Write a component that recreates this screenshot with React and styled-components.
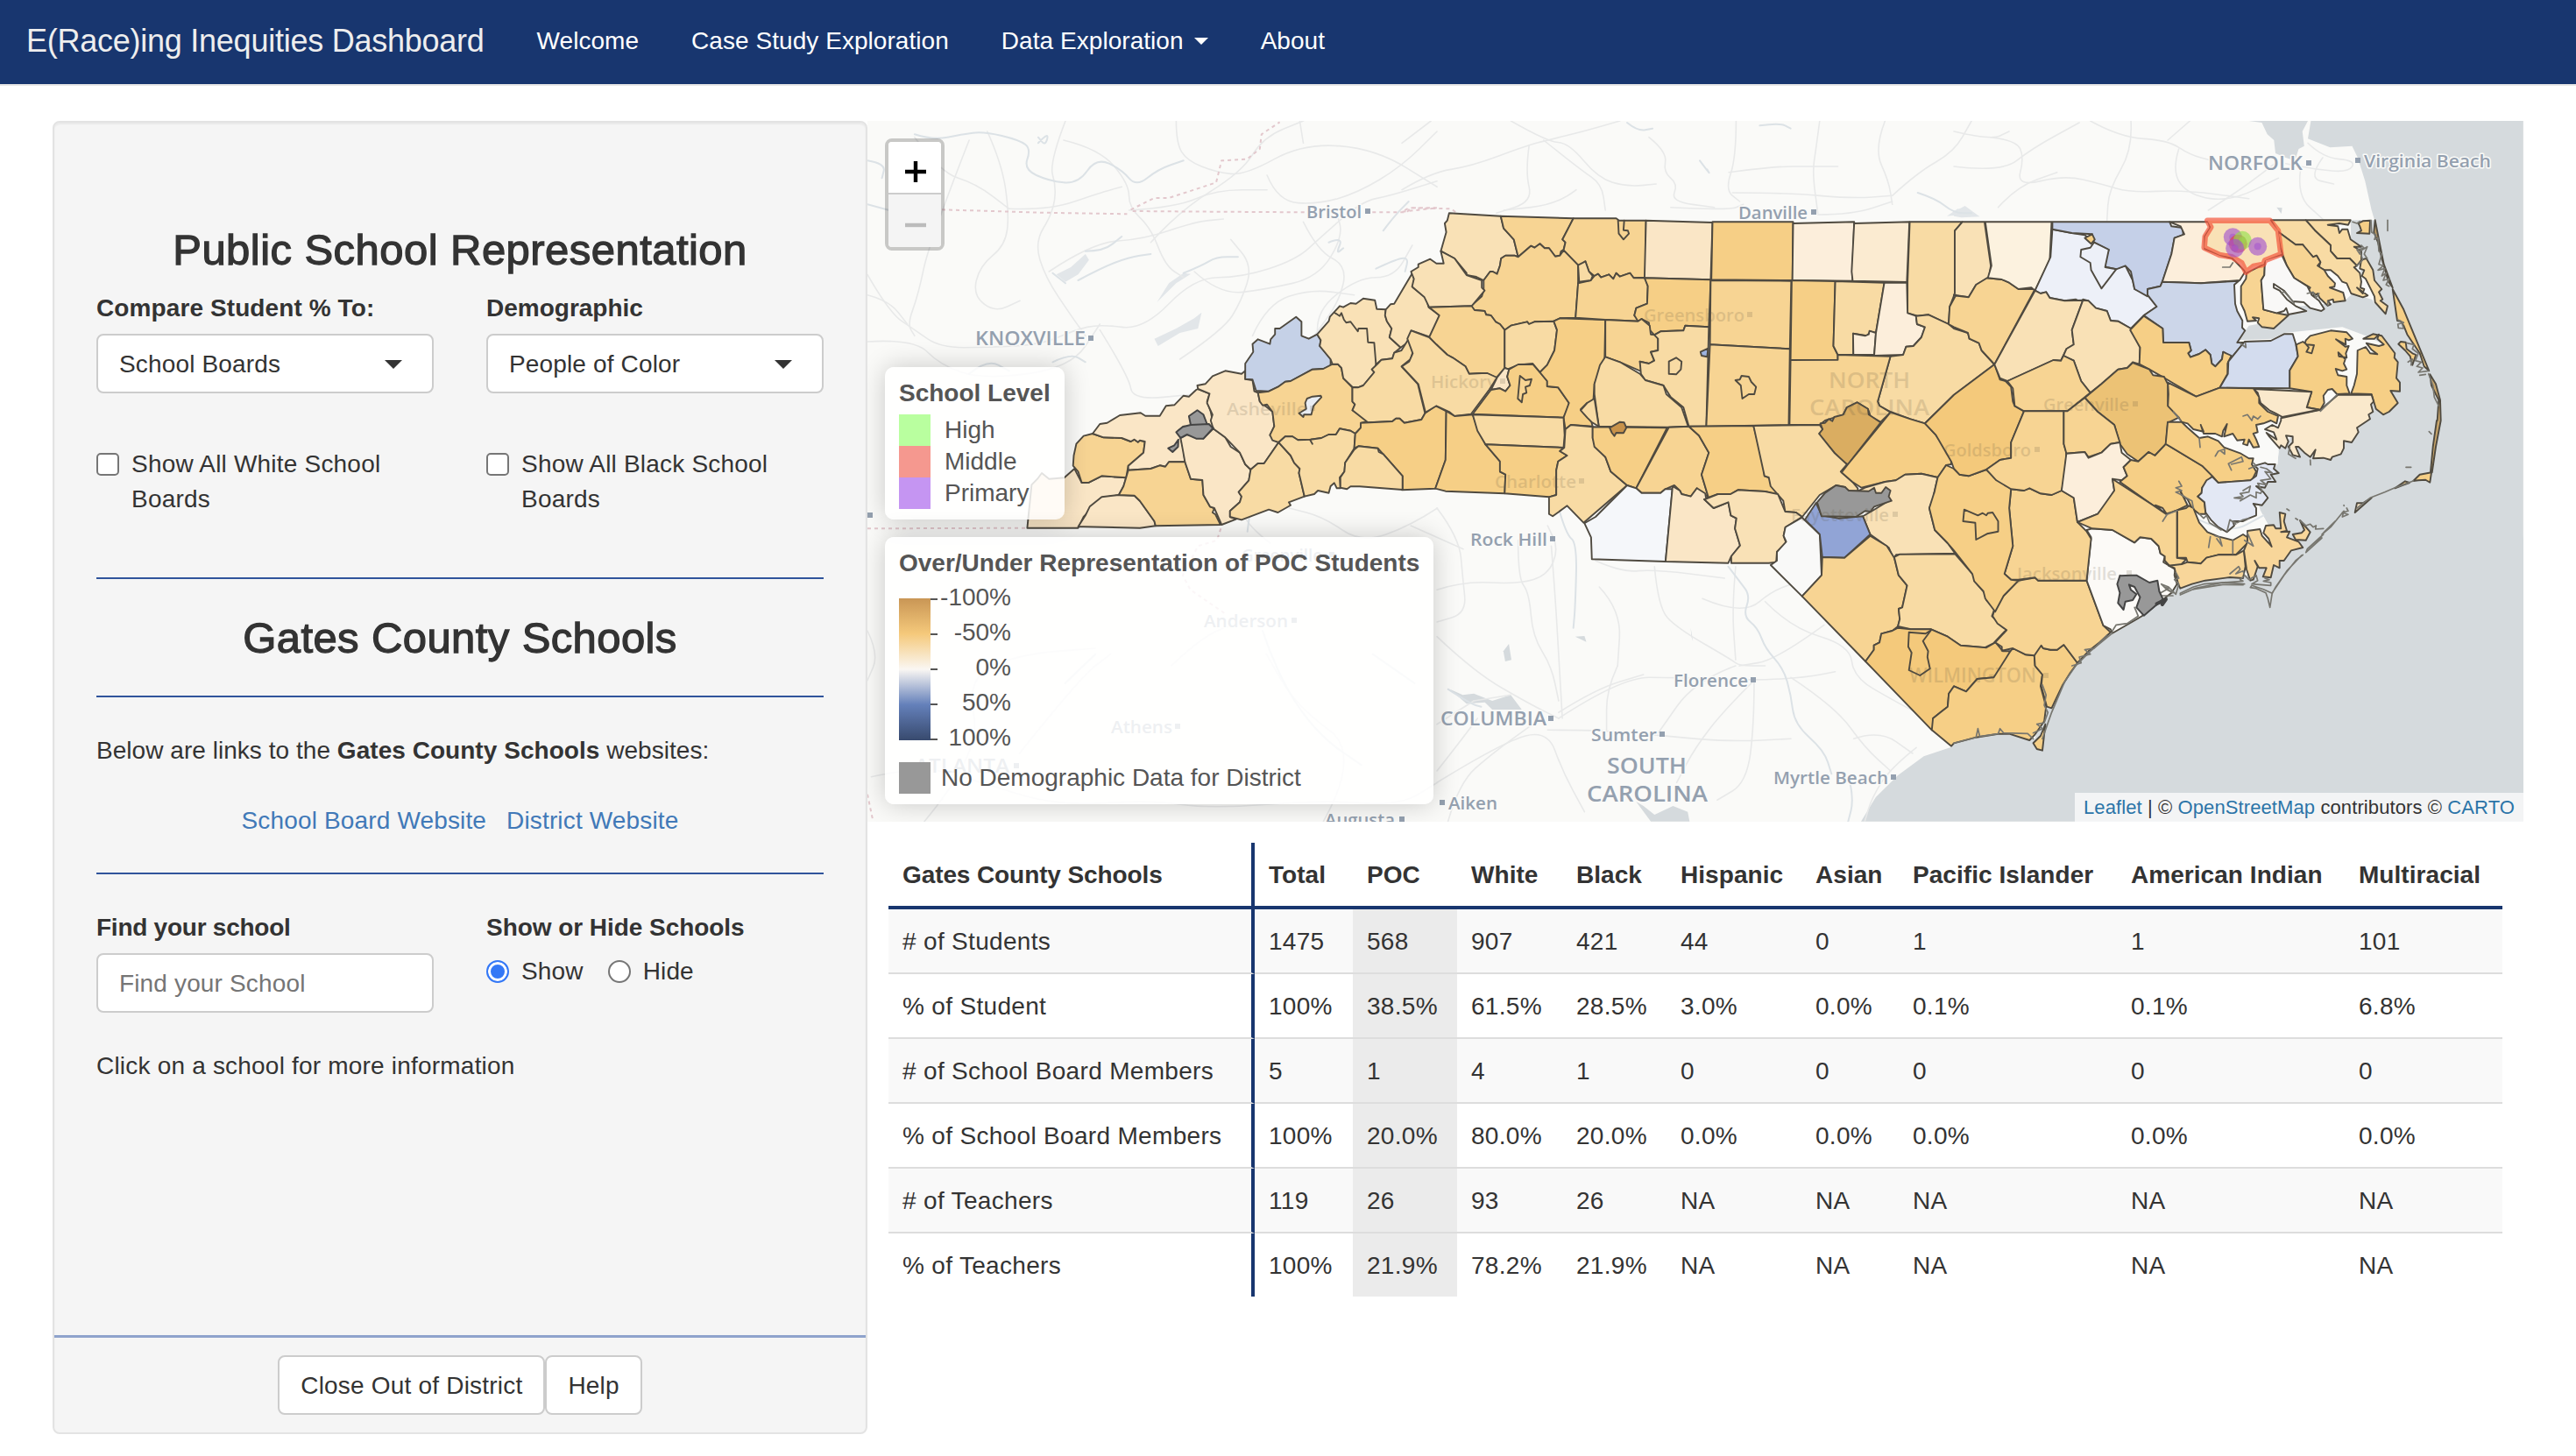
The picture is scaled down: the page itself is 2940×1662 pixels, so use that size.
import React from "react";
import styled, { createGlobalStyle } from "styled-components";

const GlobalStyle = createGlobalStyle`
  * { box-sizing: border-box; }
  body {
    margin: 0;
    background: #fff;
    color: #333;
    font-family: "Liberation Sans", Arial, sans-serif;
    font-size: 28px;
    line-height: 40px;
  }
  a { color: #4179b8; text-decoration: none; }
`;

/* ---------- navigation ---------- */
const Navbar = styled.nav`
  display: flex;
  align-items: center;
  height: 98px;
  padding: 0 30px 2px;
  background: #18366f;
  border-bottom: 2px solid #e7e7e7;
`;
const Brand = styled.span`
  font-size: 36px;
  color: #eee;
  margin-right: 60px;
  white-space: nowrap;
  letter-spacing: -0.25px;
`;
const NavItem = styled.a`
  display: flex;
  align-items: center;
  gap: 12px;
  color: #fff;
  margin-right: 60px;
  white-space: nowrap;
  letter-spacing: 0.05px;
`;
const Caret = styled.i`
  border: ${(p) => p.$size || 8}px solid transparent;
  border-top-color: currentColor;
  border-bottom: 0;
`;

/* ---------- page frame ---------- */
const Page = styled.main`
  display: grid;
  grid-template-columns: 930px 1890px;
  padding: 40px 60px 0;
  align-items: start;
`;

/* ---------- sidebar ---------- */
const Sidebar = styled.aside`
  display: flex;
  flex-direction: column;
  justify-content: space-between;
  height: 1499px;
  letter-spacing: 0.15px;
  background: #f5f5f5;
  border: 2px solid #e3e3e3;
  border-radius: 8px;
  box-shadow: inset 0 2px 2px rgba(0, 0, 0, 0.05);
`;
const SidebarBody = styled.div`
  padding: 119px 48px 0;
`;
const Title = styled.h3`
  margin: 0;
  text-align: center;
  font-size: 49px;
  line-height: 53px;
  font-weight: 400;
  letter-spacing: ${(p) => p.$track || 0}px;
  -webkit-text-stroke: 1.3px #333;
`;
const Rule = styled.hr`
  height: 2px;
  border: 0;
  background: #30549b;
  margin: ${(p) => p.$top}px 0 ${(p) => p.$bottom}px;
`;
const Pair = styled.div`
  display: grid;
  grid-template-columns: 385px 385px;
  column-gap: 60px;
  margin-top: ${(p) => p.$top || 0}px;
`;
const Label = styled.label`
  display: block;
  font-weight: 700;
  margin-bottom: 9px;
  padding-top: 1px;
  letter-spacing: ${(p) => p.$track || 0}px;
`;
const Control = styled.div`
  display: flex;
  align-items: center;
  justify-content: space-between;
  height: 68px;
  padding: 1px 34px 0 24px;
  background: #fff;
  border: 2px solid #ccc;
  border-radius: 8px;
  color: ${(p) => (p.$placeholder ? "#757575" : "#333")};
`;
const Check = styled.label`
  display: grid;
  grid-template-columns: 40px 1fr;
  letter-spacing: 0.2px;
  span { padding: 1px 30px 0 0; margin-bottom: -1px; }
`;
const Box = styled.i`
  width: 26px;
  height: 26px;
  margin-top: 8px;
  background: #fff;
  border: 2px solid #767676;
  border-radius: 5px;
`;
const Radios = styled.div`
  display: flex;
  align-items: center;
  padding-top: 1px;
`;
const RadioLabel = styled.span`
  margin-right: 28px;
`;
const Radio = styled.i`
  width: 26px;
  height: 26px;
  margin: -1px 14px 0 0;
  border-radius: 50%;
  border: 2px solid ${(p) => (p.$on ? "#3478f6" : "#767676")};
  background: ${(p) => (p.$on ? "#3478f6" : "#fff")};
  box-shadow: inset 0 0 0 3px #fff;
`;
const Note = styled.p`
  margin: ${(p) => p.$top || 0}px 0 -1px;
  padding-top: 1px;
  letter-spacing: ${(p) => p.$track || 0}px;
`;
const Links = styled.div`
  display: flex;
  justify-content: center;
  gap: 23px;
  margin: 40px 0 -1px;
  padding-top: 1px;
`;
const SidebarFooter = styled.div`
  display: flex;
  justify-content: center;
  height: 111px;
  padding-top: 20px;
  border-top: 3px solid #8fa3cc;
`;
const Button = styled.button`
  height: 68px;
  padding: 1px 24px 0;
  font: inherit;
  letter-spacing: 0.2px;
  color: #333;
  background: #fff;
  border: 2px solid #ccc;
  border-radius: 8px;
`;

/* ---------- map ---------- */
const MapFrame = styled.section`
  position: relative;
  height: 800px;
  overflow: hidden;
  background: #fafaf8;
`;
const MapCanvas = styled.svg`
  display: block;
  width: 1890px;
  height: 800px;
`;
const ZoomBar = styled.div`
  position: absolute;
  left: 20px;
  top: 20px;
  width: 68px;
  border: 4px solid rgba(0, 0, 0, 0.2);
  border-radius: 8px;
  background-clip: padding-box;
  overflow: hidden;
`;
const ZoomButton = styled.div`
  display: flex;
  align-items: center;
  justify-content: center;
  height: 60px;
  padding: 9px 0 0 2px;
  color: ${(p) => (p.$off ? "#bbb" : "#000")};
  background: ${(p) => (p.$off ? "#f4f4f4" : "#fff")};
  border-bottom: ${(p) => (p.$off ? 0 : "2px solid #ccc")};
`;
const Legend = styled.div`
  position: absolute;
  left: 20px;
  top: ${(p) => p.$top}px;
  width: ${(p) => p.$width}px;
  height: ${(p) => p.$height}px;
  padding: 12px 16px;
  color: #555;
  background: rgba(255, 255, 255, 0.84);
  border-radius: 10px;
  box-shadow: 0 0 30px rgba(0, 0, 0, 0.2);
  line-height: 36px;
`;
const LegendTitle = styled.div`
  font-weight: 700;
  white-space: nowrap;
  margin-bottom: ${(p) => p.$gap}px;
`;
const LegendRow = styled.div`
  display: flex;
  gap: ${(p) => p.$gap}px;
  white-space: nowrap;
`;
const Swatch = styled.i`
  width: 36px;
  height: 36px;
  background: ${(p) => p.$color};
`;
const Scale = styled.div`
  display: flex;
  margin-bottom: 25px;
`;
const ScaleBar = styled.div`
  width: 36px;
  height: 162px;
  background: linear-gradient(#c99655, #f5c97b 25%, #faf7f3 50%, #6480ba 75%, #384a6e);
`;
const Ticks = styled.div`
  display: flex;
  flex-direction: column;
  justify-content: space-between;
  height: 162px;
  i { width: 8px; height: 2px; background: #555; }
`;
const ScaleLabels = styled.div`
  display: grid;
  grid-template-rows: repeat(5, 40px);
  width: 84px;
  height: 162px;
  margin-top: -21px;
  line-height: 40px;
  text-align: right;
  span { white-space: nowrap; }
`;
const Attribution = styled.div`
  position: absolute;
  right: 0;
  bottom: 0;
  height: 33px;
  padding: 0 10px;
  line-height: 33px;
  font-size: 22px;
  letter-spacing: 0.1px;
  white-space: nowrap;
  background: rgba(255, 255, 255, 0.7);
  a { color: #2b74a8; }
`;

/* ---------- table ---------- */
const Table = styled.table`
  width: 1842px;
  margin: 24px 0 0 24px;
  table-layout: fixed;
  border-collapse: separate;
  border-spacing: 0;
`;
const Col = styled.col`
  width: ${(p) => p.$w}px;
`;
const Row = styled.tr`
  background: ${(p) => (p.$striped ? "#f9f9f9" : "#fff")};
`;
const Th = styled.th`
  height: 76px;
  padding: 2px 0 0 16px;
  text-align: left;
  white-space: nowrap;
  letter-spacing: ${(p) => (p.$first ? -0.1 : 0.05)}px;
  border-bottom: 4px solid #18366f;
  border-right: ${(p) => (p.$first ? "4px solid #18366f" : 0)};
`;
const Td = styled.td`
  height: ${(p) => (p.$last ? 72 : 74)}px;
  padding: 1px 0 0 16px;
  white-space: nowrap;
  letter-spacing: ${(p) => (p.$first ? 0.32 : 0.3)}px;
  border-bottom: ${(p) => (p.$last ? 0 : "2px solid #ddd")};
  border-right: ${(p) => (p.$first ? "4px solid #18366f" : 0)};
  background: ${(p) => (p.$shade ? "#ebebeb" : "transparent")};
`;

/* Map outlines are digitised on several sheets; each has its own origin and scale. */
const SHEETS = {
  a: [990, 130, 2.412, 3],
  b: [1600, 130, 2.412, 3],
  c: [2230, 130, 2.376, 3],
  d: [990, 560, 2.306, 3],
  e: [1640, 560, 2.376, 3],
  f: [2230, 560, 2.376, 3],
  g: [2460, 240, 3, 3],
  h: [2460, 480, 3, 3],
};
const project = (text) => {
  let s = SHEETS.a;
  const out = [];
  text.trim().split(/\s+/).forEach((t) => {
    if (SHEETS[t]) s = SHEETS[t];
    else {
      const [x, y] = t.split(",").map(Number);
      out.push([+(s[0] + x / s[2]).toFixed(1), +(s[1] + y / s[3]).toFixed(1)]);
    }
  });
  return out;
};
const outline = (text) => "M" + project(text).map((p) => p.join(",")).join("L") + "Z";
const line = (text) => "M" + project(text).map((p) => p.join(",")).join("L");
const curve = (text) => {
  const p = project(text);
  let d = `M${p[0]}`;
  for (let i = 1; i < p.length - 1; i++) {
    d += `Q${p[i]} ${(p[i][0] + p[i + 1][0]) / 2},${(p[i][1] + p[i + 1][1]) / 2}`;
  }
  return d + `L${p[p.length - 1]}`;
};

const P = "#fae6c6", L = "#f9e1b6", M = "#f8dba4", O = "#f7d493", D = "#f6cf86", X = "#f4c97b";
const CREAM = "#fceedb", GRAY = "#989898";

const DISTRICTS = [
  [P, "a 440,1418 452,1270 468,1250 480,1230 500,1250 542,1246 570,1215 580,1240 590,1263 610,1262 645,1240 712,1246 705,1275 692,1305 645,1315 595,1380 580,1418"],
  [O, "a 620,1095 650,1108 700,1110 725,1122 735,1115 745,1124 750,1118 764,1122 760,1160 718,1205 712,1246 645,1240 610,1262 590,1263 580,1225 566,1205 568,1170 575,1130 595,1103"],
  [P, "a 620,1095 640,1062 660,1058 695,1032 752,1024 765,1034 805,1034 822,1000 845,997 870,965 885,968 905,945 910,942 942,958 935,985 945,1020 950,1050 952,1075 870,1070 855,1085 862,1110 870,1150 874,1192 830,1192 820,1208 805,1204 780,1215 718,1220 718,1205 760,1160 764,1122 750,1118 745,1124 735,1115 725,1122 700,1110 650,1108"],
  [P, "a 580,1414 600,1375 612,1345 645,1312 692,1305 735,1307 750,1325 790,1395 793,1411 750,1418 595,1414"],
  [O, "a 712,1246 718,1220 780,1215 805,1204 820,1208 830,1192 874,1192 890,1250 922,1254 925,1305 943,1345 955,1350 950,1365 958,1372 972,1407 793,1411 790,1395 750,1325 735,1307 692,1305 705,1275"],
  [P, "a 862,1110 880,1098 925,1112 952,1078 985,1108 1000,1140 1025,1160 1040,1200 1055,1218 1050,1255 1022,1295 1030,1310 1025,1330 998,1360 998,1380 1015,1388 975,1407 955,1350 943,1345 925,1305 922,1254 890,1250 874,1192 868,1150"],
  [P, "a 908,930 930,925 950,898 985,880 1030,890 1040,880 1040,908 1060,912 1065,950 1075,955 1080,985 1095,1000 1115,1020 1120,1070 1108,1100 1132,1125 1092,1197 1075,1197 1055,1218 1040,1200 1025,1160 985,1108 952,1078 945,1050 950,1030 935,990 942,958 910,942"],
  ["#c5d1e7", "a 1040,855 1062,815 1060,788 1075,772 1108,788 1110,772 1122,755 1122,735 1135,735 1180,695 1195,712 1195,760 1215,770 1238,755 1248,775 1245,795 1275,840 1275,862 1255,873 1225,875 1165,915 1150,917 1130,935 1105,950 1070,948 1060,910 1040,908"],
  [O, "a 1075,955 1105,950 1130,935 1150,917 1165,915 1225,875 1255,873 1280,857 1295,857 1305,870 1310,905 1335,937 1335,985 1342,995 1335,1015 1378,1052 1360,1058 1358,1075 1343,1095 1330,1085 1300,1078 1290,1098 1270,1098 1250,1110 1220,1115 1185,1117 1170,1105 1150,1105 1132,1125 1115,1118 1108,1100 1120,1070 1115,1020 1100,995 1088,998 1080,985"],
  ["#e9edf3", "a 1188,1025 1208,1010 1205,990 1210,975 1225,968 1248,965 1250,970 1228,1000 1222,1030 1202,1030 1200,1038"],
  [L, "a 1238,755 1270,710 1273,695 1300,658 1310,662 1330,648 1345,650 1365,632 1397,638 1402,668 1427,670 1425,690 1430,710 1443,735 1437,765 1455,785 1468,800 1450,818 1445,838 1415,842 1400,858 1395,885 1365,930 1350,937 1335,935 1310,905 1305,870 1295,857 1280,857 1275,840 1245,795 1248,775"],
  [L, "a 1427,670 1440,652 1450,650 1500,545 1505,565 1502,595 1538,630 1545,662 1575,690 1550,765 1498,742 1490,780 1468,800 1455,785 1437,765 1443,735 1430,710 1425,690"],
  [M, "a 1350,937 1365,930 1395,885 1388,875 1405,855 1415,842 1445,838 1450,818 1470,810 1490,770 1503,810 1495,840 1470,865 1515,925 1535,1025 1525,1047 1490,1055 1478,1058 1465,1043 1455,1043 1445,1053 1378,1057 1335,1015 1342,995 1335,985 1335,937"],
  [M, "a 1055,1218 1075,1197 1092,1197 1132,1125 1165,1170 1175,1195 1190,1215 1188,1230 1203,1310 1160,1330 1165,1340 1130,1365 1105,1355 1030,1390 998,1380 998,1360 1025,1330 1030,1310 1022,1295 1050,1255"],
  [M, "a 1132,1125 1150,1105 1170,1105 1185,1117 1220,1115 1250,1110 1270,1098 1290,1098 1300,1078 1330,1085 1343,1095 1340,1145 1315,1195 1313,1225 1300,1245 1302,1282 1292,1282 1285,1264 1275,1275 1270,1298 1240,1290 1230,1302 1203,1310 1188,1230 1190,1215 1175,1195 1165,1170"],
  [D, "a 1343,1095 1358,1075 1358,1058 1445,1053 1455,1043 1465,1043 1478,1058 1525,1047 1535,1025 1565,1000 b 122,1018 120,1185 92,1283 0,1288 a 1473,1287 1473,1240 1420,1165 1405,1145 1352,1138 1340,1145"],
  [M, "a 1352,1138 1405,1145 1408,1158 1420,1165 1473,1240 1473,1287 1355,1276 1330,1276 1320,1285 1302,1280 1302,1245 1313,1225 1315,1195 1340,1150"],
  [L, "b 130,340 272,350 280,392 308,430 320,490 310,485 285,485 273,495 270,520 262,548 250,540 243,540 225,570 205,558 178,552 178,545 145,495 107,470 122,405 118,375 125,365"],
  [O, "b 272,350 472,358 442,430 450,440 445,465 438,470 435,485 422,488 405,460 393,460 380,445 365,458 355,452 320,490 308,430 280,392"],
  [O, "b 472,358 590,358 598,365 672,365 670,560 638,562 628,545 600,557 590,545 582,565 570,550 548,560 540,548 530,555 515,540 505,505 490,520 485,518 445,467 450,440 442,430"],
  [O, "b 320,490 355,452 365,458 380,445 393,460 405,460 422,488 435,485 445,467 485,518 485,580 478,698 435,700 418,710 365,712 350,720 345,712 300,725 283,740 270,720 258,712 245,690 232,688 228,675 200,672 190,658 220,625 225,605 225,570 243,540 250,540 262,548 270,520 273,495 285,485 310,485"],
  [L, "b 25,540 45,525 45,515 78,497 95,512 115,512 107,470 145,495 178,552 220,570 220,595 228,605 192,658 75,662 62,628 28,592 33,565"],
  [O, "b 75,662 192,658 200,672 228,675 232,688 245,690 258,712 270,720 283,740 283,870 260,903 235,888 220,888 185,890 175,865 140,835 125,825 95,790 75,765 103,690"],
  [M, "b 25,742 75,765 95,790 125,825 140,835 175,865 185,890 220,888 235,888 262,903 240,945 190,1028 145,1035 130,1020 95,1000 65,1022 45,925 0,865 20,848 30,820 15,770"],
  [M, "b 283,740 300,725 345,712 350,720 365,712 418,710 427,740 420,810 400,860 380,885 360,855 320,860 290,875 283,868"],
  [P, "b 283,870 295,875 290,900 298,930 285,950 270,940 245,945 262,903"],
  [D, "b 295,875 320,858 360,857 380,885 400,915 400,933 430,937 460,990 455,1015 445,1040 195,1028 245,945 270,940 285,950 298,930 290,900"],
  [O, "b 325,897 340,912 357,908 352,930 340,935 343,955 333,960 330,988 319,975"],
  [D, "b 418,710 435,700 560,705 558,840 530,925 527,980 510,990 492,1012 522,1055 525,1070 465,1065 450,1080 445,1040 460,990 430,937 400,933 400,915 380,885 400,860 420,810 427,740"],
  [O, "b 485,580 520,570 530,555 540,548 548,560 570,550 582,565 590,545 600,557 628,545 638,562 670,562 677,590 675,650 645,665 640,690 655,710 560,705 478,698"],
  [M, "b 485,518 505,505 515,540 525,555 520,570 488,575"],
  [P, "b 672,365 855,372 850,568 668,562"],
  [D, "b 855,370 1077,370 1075,570 852,568"],
  [CREAM, "b 1077,375 1245,370 1240,540 1241,572 1075,570"],
  ["#fbebd1", "b 1245,375 1397,370 1390,576 1241,572 1238,540"],
  [M, "b 1398,370 1543,370 1522,400 1522,615 1508,660 1505,720 1450,688 1420,692 1392,682 1392,576"],
  [L, "b 1543,370 c 83,370 100,520 95,560 60,585 40,628 0,620 b 1522,615 1522,400"],
  [D, "b 668,562 850,568 845,730 780,725 775,742 712,745 695,757 682,740 680,715 660,702 650,710 640,690 645,665 675,650 677,590"],
  [O, "b 850,570 1072,572 1068,805 848,790"],
  [D, "b 1073,570 1193,573 1188,795 1200,825 1200,842 1070,843"],
  [M, "b 1193,573 1328,578 1305,750 1290,745 1280,760 1242,752 1243,825 1200,825 1188,795"],
  [CREAM, "b 1242,752 1275,760 1285,755 1287,743 1305,750 1300,825 1243,825"],
  [CREAM, "b 1328,578 1390,578 1392,682 1415,692 1418,720 1440,730 1430,765 1408,795 1388,797 1380,825 1300,828 1305,750"],
  [M, "b 1415,692 1450,688 1505,720 c 0,735 38,750 42,770 68,785 75,810 110,858 0,962 b 1440,1060 1400,1045 1345,1020 1315,1000 1310,985 1345,830 1380,825 1388,797 1408,795 1430,765 1440,730 1418,720"],
  [O, "b 560,705 650,710 660,702 682,725 685,755 700,757 705,770 705,810 685,815 695,845 680,855 655,848 665,885 600,850 560,832"],
  [M, "b 695,757 712,745 775,742 780,725 845,730 838,1070 790,1070 775,1005 740,970 720,930 670,912 658,890 655,848 680,855 695,845 685,815 705,810 705,770"],
  [M, "b 735,848 755,835 770,848 768,875 755,892 735,890"],
  ["#9db3e0", "b 822,815 843,803 840,832 825,828"],
  [M, "b 560,832 600,850 655,890 670,912 720,930 728,960 770,1005 788,1070 730,1073 542,1070 530,960 530,925 545,860"],
  [M, "b 530,975 542,1070 522,1055 510,1040 492,1015 510,990"],
  [O, "b 848,790 1068,805 1065,1065 838,1070"],
  [O, "b 918,912 930,910 935,897 955,900 962,918 975,935 970,960 955,960 937,975 933,930"],
  [O, "b 1070,843 1200,842 1200,825 1345,830 1310,985 1315,1000 1345,1022 1318,1055 1290,1035 1283,1010 1253,988 1225,1005 1215,1030 1165,1050 1150,1065 1067,1065"],
  ["#daad61", "b 1152,1060 1165,1058 1175,1045 1185,1052 1190,1038 1215,1030 1225,1005 1253,988 1283,1010 1285,1030 1318,1057 1228,1200 1215,1195 1190,1160 1148,1095 1158,1080"],
  [D, "b 122,1018 145,1035 195,1030 210,1085 230,1132 270,1190 270,1225 285,1235 283,1300 120,1292 92,1283 120,1185"],
  [M, "b 195,1030 445,1040 448,1100 445,1143 230,1132 208,1085"],
  [D, "b 230,1132 445,1143 435,1155 455,1170 430,1190 425,1220 425,1305 405,1312 283,1300 285,1235 270,1225 270,1190"],
  [M, "b 450,1080 465,1065 525,1072 525,1110 535,1140 560,1175 575,1225 620,1272 500,1400 455,1342 415,1378 405,1370 405,1312 425,1305 425,1220 430,1190 455,1170 435,1155 447,1143"],
  [D, "b 525,1072 730,1075 645,1282 620,1272 575,1225 560,1175 530,1140 525,1110"],
  ["#c8924a", "b 572,1075 600,1055 612,1057 618,1075 610,1093 590,1092 585,1103 578,1092"],
  [O, "b 735,1073 790,1070 818,1102 845,1160 825,1235 843,1310 820,1295 812,1282 795,1310 770,1302 765,1290 750,1272 725,1285 712,1298 660,1298 645,1282"],
  [D, "b 790,1070 968,1068 995,1200 998,1240 1010,1245 1035,1305 1000,1293 925,1288 905,1302 870,1302 840,1315 843,1310 825,1235 845,1160 818,1102"],
  [M, "b 968,1068 1150,1065 1158,1080 1148,1095 1190,1160 1225,1200 1208,1225 1240,1260 1255,1282 1255,1292 1225,1290 1220,1278 1195,1272 1150,1305 1102,1380 1085,1365 1055,1362 1050,1325 1015,1275 1010,1245 998,1240"],
  [D, "b 1345,1022 1400,1045 1440,1060 1470,1100 1512,1175 1512,1200 1498,1203 1475,1245 1430,1232 1385,1235 1360,1255 1330,1260 1265,1280 1240,1260 1210,1228 1228,1200"],
  ["#f5f7fa", "b 620,1272 645,1282 660,1298 712,1298 725,1285 745,1285 e 638,0 620,243 420,235 418,160 400,112 430,90"],
  [P, "b 745,1275 765,1290 770,1302 795,1310 812,1282 835,1300 838,1320 e 725,30 750,60 790,40 797,85 812,95 808,130 822,188 798,225 790,248 620,243 638,0"],
  [L, "b 838,1318 870,1302 905,1302 925,1288 1000,1293 1035,1302 1055,1362 1085,1365 e 990,90 945,125 940,155 947,180 922,210 920,245 900,248 798,248 798,225 822,188 808,130 812,95 797,85 790,40 750,60 725,30"],
  ["#f9f9f8", "e 990,92 1038,150 1043,290 990,362 905,255 922,240 922,210 947,175 940,155 945,125"],
  [L, "b 1255,1292 1275,1280 1330,1260 1360,1255 1385,1235 1430,1232 1475,1245 1465,1300 e 1348,20 1335,60 1350,135 1385,180 1405,215 1245,220 1238,232 1225,195 1175,150 1155,88 1180,70 1225,35"],
  ["#91a4d6", "e 998,100 1028,42 1043,85 1090,95 1155,88 1175,150 1105,230 1045,228 1038,150"],
  [GRAY, "b 1143,1330 1165,1298 1195,1272 1220,1278 1230,1290 1285,1292 1300,1280 1305,1298 1320,1298 1332,1278 1345,1290 1340,1310 1348,1325 1300,1345 1290,1362 1275,1360 1250,1380 1155,1378"],
  [O, "e 1045,228 1105,230 1175,155 1220,190 1240,230 1252,290 1275,325 1262,400 1252,405 1255,440 1250,465 1235,480 1205,490 1200,520 1185,530 1185,545 1162,585 990,362 1043,290"],
  [M, "e 1240,228 1255,218 1405,217 1455,290 1458,310 1485,350 1490,375 1512,405 1505,430 1525,455 1545,475 1510,522 1485,538 1420,530 1385,500 1340,475 1285,475 1250,465 1255,440 1252,405 1262,400 1275,325 1252,290"],
  [X, "e 1250,470 1285,475 1340,475 1385,500 1420,530 1490,538 1515,520 1535,550 1555,550 1530,610 1510,640 1465,645 1435,688 1402,670 1388,695 1385,740 1365,760 1345,780 1350,800 1342,820 1162,585 1185,545 1185,530 1200,520 1205,490 1235,480"],
  [X, "e 1280,485 1325,490 1340,478 1318,515 1332,550 1330,570 1337,610 1310,633 1280,615 1287,555 1278,535"],
  [D, "e 1345,780 1365,760 1385,740 1388,695 1402,670 1435,688 1465,645 1510,640 1555,550 f 160,540 195,562 218,565 220,600 240,630 235,670 250,740 245,790 220,835 205,855 150,833 120,833 60,845 0,865 e 1395,875 1342,820"],
  [D, "f 218,565 225,540 237,530 242,540 262,545 280,545 298,528 335,590 315,625 295,665 265,745 252,740 237,670 240,630 220,600"],
  [D, "f 215,865 235,840 248,800 240,890 225,885"],
  [O, "f 175,308 220,298 228,308 360,308 405,462 425,485 395,520 365,550 335,590 298,528 280,545 262,545 242,540 237,530 218,565 195,562 160,540 130,548 130,535 112,520 143,478 118,455 105,430 112,400 135,360"],
  ["#fcfaf7", "f 360,135 375,130 430,135 490,178 505,160 535,165 555,190 560,215 572,225 568,245 600,270 598,290 605,320 590,350 510,430 490,445 430,488 425,475 405,462 360,308 372,160"],
  [O, "c 155,1285 190,1290 205,1282 235,1300 265,1305 292,1290 325,1315 335,1398 f 360,140 372,165 360,308 228,308 220,298 175,305 155,305 137,285 160,190 150,60"],
  [D, "b 1475,1245 1498,1203 c 0,1215 15,1235 40,1240 88,1218 155,1285 f 150,60 160,190 137,285 155,305 175,308 135,360 112,415 85,370 80,345 55,310 50,285 0,205 e 1385,180 1350,135 1335,60 1350,0 1348,10"],
  [D, "f 28,65 65,85 78,77 88,85 92,77 105,75 120,105 120,140 90,148 60,168 58,110 25,105"],
  [X, "b 1440,1060 c 0,962 110,858 125,910 140,915 155,935 160,985 165,1000 190,1018 155,1125 155,1178 125,1185 88,1218 40,1240 15,1235 0,1215 b 1512,1190 1470,1100"],
  [O, "c 0,622 40,628 60,585 90,562 130,567 150,578 175,600 220,600 110,858 75,810 68,785 42,770 38,750 0,730 b 1505,720 1508,660 1525,620"],
  ["#fcf2df", "c 85,370 265,370 260,500 220,605 210,595 175,600 150,578 130,567 92,562 102,520"],
  ["#edf0f8", "c 267,395 320,408 355,415 380,440 420,465 410,520 440,530 465,520 485,570 490,600 525,620 550,660 515,690 480,735 445,710 425,708 415,675 385,665 365,640 350,635 345,645 330,635 300,640 260,630 250,610 235,615 220,605 262,490"],
  ["#c5d0e8", "c 267,370 585,370 590,385 620,390 622,415 598,425 590,480 565,575 560,590 525,600 525,625 490,600 485,570 480,540 465,520 440,532 415,525 405,520 420,465 380,440 375,412 320,408 267,395"],
  ["#edf0f8", "c 380,440 370,458 345,465 343,490 370,510 372,535 400,598 440,532 410,525 420,465"],
  [D, "c 355,425 375,412 382,430 372,445"],
  [CREAM, "c 585,370 690,370 695,390 680,420 680,462 725,485 755,495 790,540 775,570 670,580 565,575 590,480 598,425 625,412 615,385"],
  ["#ccd6e9", "c 565,575 670,580 g 285,242 270,255 273,320 280,345 298,378 297,402 307,412 280,453 303,453 250,518 253,498 232,485 228,510 205,535 193,525 188,495 172,478 150,492 120,503 112,490 122,480 115,453 27,453 25,405 c 515,690 550,660 525,620 525,600 560,590"],
  [L, "c 220,605 235,615 250,610 260,630 300,640 350,638 320,740 325,790 305,805 290,845 270,843 145,915 125,905 110,858"],
  [L, "c 350,638 365,640 385,665 415,675 425,708 445,710 480,735 505,800 503,857 485,850 470,870 445,875 400,925 370,955 345,915 325,845 297,828 305,805 325,790 320,740"],
  [D, "c 478,740 515,692 g 25,405 27,453 115,453 122,480 112,490 120,503 150,492 172,478 188,495 193,525 205,535 228,510 232,485 260,498 247,525 247,560 220,608 140,638 60,592 20,568 c 530,875 503,857 505,800"],
  ["#d3dcee", "g 305,450 395,447 440,424 470,424 480,455 488,500 460,548 460,610 220,608 248,560 250,518"],
  [D, "g 482,460 505,450 518,460 543,462 535,490 517,485 525,470 512,455 515,445 530,430 600,412 655,418 675,440 662,445 650,440 652,460 618,442 650,467 662,465 652,490 655,505 628,500 626,487 640,500 650,510 645,525 655,545 640,550 617,543 625,565 655,570 655,600 665,628 622,630 605,612 590,615 575,635 578,660 565,683 518,675 535,622 460,610 460,548 488,500"],
  [D, "g 692,480 720,468 735,490 760,493 740,478 722,455 765,465 782,460 760,440 765,425 750,440 712,440 745,424 775,430 820,490 818,505 830,520 825,575 837,590 837,620 805,618 830,660 800,690 780,700 755,680 740,630 670,628 680,600 690,560"],
  ["#fae9cc", "g 430,712 565,683 625,632 740,632 747,655 738,665 745,690 730,700 735,715 h 690,25 695,40 672,75 645,70 645,95 635,115 605,125 600,135 575,128 540,130 548,100 530,125 510,110 490,90 480,90 495,125 470,118 455,90 470,75 470,55 447,52 455,72 445,95 430,85 425,95 390,55 380,42 415,65 405,40 375,30 400,15 420,25 430,0"],
  ["#fae9cc", "g 335,612 535,622 518,675 560,683 435,708 410,695 390,685 360,660 350,625"],
  [D, "c 580,920 657,968 g 220,608 335,610 355,640 355,660 385,690 420,705 h 415,10 395,0 370,10 345,15 350,40 335,45 345,65 355,90 335,92 320,65 315,85 300,80 305,65 280,68 265,45 235,55 245,12 232,35 228,55 205,45 165,45 155,15 165,38 130,30 110,10 90,5 c 610,1040 580,1005 582,960"],
  ["#ecc275", "c 355,972 400,925 445,875 470,870 485,852 530,875 540,895 570,900 580,925 580,1000 610,1040 580,1058 575,1130 545,1170 528,1158 500,1190 470,1165 450,1130 435,1065 390,1020"],
  [O, "c 145,915 270,843 290,845 297,828 325,845 345,915 370,955 308,1018 190,1018 165,1000 160,940"],
  [O, "c 190,1018 298,1018 298,1130 305,1160 300,1250 292,1290 265,1305 235,1300 205,1282 190,1290 155,1285 115,1255 88,1218 125,1185 155,1178 155,1125"],
  [O, "c 298,1018 308,1018 355,972 390,1020 435,1065 450,1125 425,1130 400,1160 365,1175 355,1158 305,1163 298,1130"],
  [CREAM, "c 305,1163 355,1158 365,1178 400,1160 425,1130 450,1125 455,1160 480,1185 460,1210 470,1240 455,1255 430,1250 435,1290 410,1340 390,1370 335,1398 325,1315 292,1290"],
  [D, "c 480,1185 500,1190 528,1158 545,1170 575,1130 h 35,80 160,155 195,190 160,230 158,248 145,260 168,280 172,320 150,320 125,300 110,270 90,255 85,240 110,290 75,307 62,312 40,322 25,300 0,290 c 575,1370 540,1340 450,1260 470,1240 460,1210"],
  [D, "h 35,80 42,5 90,5 110,25 150,60 180,55 215,70 235,92 290,112 320,130 335,130 330,150 345,175 330,205 215,213 195,190 160,155"],
  ["#e3e8f4", "h 160,230 175,205 195,193 215,213 325,205 345,190 350,165 340,155 375,145 385,150 410,150 405,165 422,180 395,185 412,210 385,210 375,230 345,225 370,245 385,265 365,290 335,285 345,300 345,325 320,335 300,345 265,345 270,360 245,382 215,365 190,340 172,315 168,280 145,260 158,248"],
  [O, "c 430,1250 540,1340 575,1370 605,1358 f 605,230 630,235 615,255 585,258 572,240 572,225 560,215 555,190 535,165 505,160 490,178 430,135 375,130 335,108 c 390,1370 435,1290"],
  [D, "h 75,307 105,300 115,292 130,300 150,350 178,382 215,397 265,410 300,390 315,400 315,420 275,460 215,460 175,470 155,490 110,485 105,470 75,470"],
  ["#f8d69a", "h 45,497 90,492 110,485 155,490 175,470 215,460 275,460 303,445 308,500 300,540 255,537 170,548 125,560 85,575 78,560 65,505"],
  ["#f8d69a", "h 303,445 315,415 315,378 358,372 365,395 388,420 398,432 388,405 370,385 378,360 405,358 412,370 430,370 425,315 445,320 440,345 450,378 430,382 460,380 450,400 490,415 505,435 465,445 440,480 425,480 425,505 405,495 395,538 368,535 380,505 355,505 340,480 350,500 335,545 325,548 312,510"],
  ["#f8d69a", "h 495,342 530,382 515,410 480,408 470,390 500,385 510,375"],
  [M, "g 515,34 668,34 660,50 630,45 590,50 625,55 630,78 640,65 658,65 668,100 705,125 680,125 705,140 705,170 690,190 665,165 622,165 600,140 600,120 545,68"],
  [M, "g 395,34 515,34 545,68 600,120 600,140 622,165 665,165 690,190 680,195 700,215 705,245 702,265 715,270 710,285 690,265 727,292 710,298 670,285 655,250 640,245 625,225 600,205 580,205 560,195 565,178 552,155 540,160 510,130 505,118 480,118 418,72"],
  [O, "g 418,72 480,118 505,118 540,160 552,155 565,178 555,190 578,205 590,225 615,250 613,262 597,265 643,282 650,310 610,315 608,305 590,310 600,322 590,327 562,300 555,285 535,300 545,285 520,280 530,265 475,232 450,190 435,150 428,130"],
  [O, "g 312,215 375,183 373,222 362,240 370,340 415,352 455,360 405,405 365,400 350,385 355,370 333,367 345,378 315,380 305,345 293,320 293,260 310,235"],
  ["#f9f8f7", "g 375,170 432,152 450,190 475,232 520,260 535,290 560,310 578,338 568,345 530,335 508,315 470,312 440,275 405,252 405,265 425,275 450,305 480,328 517,345 455,357 448,335 440,345 415,352 370,340 362,240 373,222"],
  [M, "g 705,170 722,165 745,205 750,240 775,270 765,280 778,305 770,310 795,328 788,355 752,315 750,295 720,235 707,225 715,205 700,200"],
  [D, "g 695,45 710,37 735,35 733,80 690,78 705,70 700,55"],
  ["#bb9c66", "g 752,34 765,100 782,185 812,265 798,245 775,165 762,110 748,75"],
  [D, "g 812,270 850,340 937,550 920,535 905,490 885,460 862,425 850,395 840,380 828,378"],
  [D, "g 832,458 840,450 857,452 860,475 880,490 892,495 880,530 872,500 855,480"],
  ["#c9a66b", "g 940,562 960,595 975,650 977,720 h 977,0 960,90 947,178 942,175 950,90 963,0 g 965,720 970,650 945,600"],
  [D, "h 883,207 905,185 945,178 940,212 925,203 900,205"],
  [D, "h 820,232 855,208 870,213 845,222"],
  [P, "h 683,315 690,283 710,283 740,265"],
];

const COAST = [
  "h 883,207 820,230 785,245 735,265 690,300", "h 645,290 646,292", "h 655,300 660,310 640,315 660,322 640,330 645,310 600,365 570,390 580,380 615,345",
  "h 570,402 515,452 520,440 575,390", "h 505,460 480,480 440,530 400,590 392,640 385,610 378,590 345,575 325,572 330,565 370,578 400,592 412,570 450,515 500,462",
  "h 85,597 135,575 230,555 305,560", "h 85,592 130,570 165,560 300,550 290,545 300,535", "h 130,578 230,562 300,563",
  "h 255,525 285,500 290,510 275,525 300,515 305,530 320,545 345,530 350,548 330,560 395,565 395,555 370,550 390,545 375,540",
  "h 60,600 0,600 45,575 30,570 60,590 40,580 20,560 45,570 70,595 80,560 65,545 80,540 70,520",
  "f 430,488 370,550 330,600 300,655 265,760 240,850",
  "f 450,290 470,310 465,330 490,325 500,350",
  "f 430,480 440,460 470,455 500,430 490,400", "f 415,495 380,540 355,545 370,560 340,570 345,590 320,600",
  "f 240,665 250,700 245,735 255,760 245,795 225,800 240,815 215,830", "f 0,865 30,855 60,845 65,815 70,842 120,833 125,815 135,830 200,832 215,850",
  "c 610,1040 595,1020 615,1050", "h 153,92 150,60", "h 205,122 215,105 237,98 237,115 225,105", "h 260,170 250,148 275,135 295,125 300,140 260,150", "h 320,165 345,155 335,145",
  "h 300,240 325,225 320,245 290,250 300,260 270,265 300,268 290,275 325,255 345,265 345,245 360,250 365,240 350,215 380,220 360,205 395,200 375,175 400,180 380,165 360,160",
  "h 80,208 90,225 70,230 90,240 70,245 90,255 105,265 125,275 130,300", "h 150,320 165,335 175,325 185,350 210,365 225,375",
  "h 245,380 255,340 275,355", "h 265,345 280,350 300,340 320,335", "h 25,345 40,322 75,308", "h 182,435 188,398", "h 210,405 228,430 220,400 205,395", "h 265,410 265,455", "h 315,385 335,430 305,410",
  "h 495,342 515,360 530,355 540,365 550,360 548,372 575,370", "h 480,335 487,340", "h 450,303 458,308", "h 530,135 531,152", "h 858,160 875,160", "h 937,38 945,46", "h 460,90 455,115 480,130",
  "g 230,195 255,195 265,180",
  "g 795,34 795,70", "g 738,34 740,75 755,85 750,100 762,95 765,140 775,150 765,185 780,190 762,205 785,200 775,225 790,215 780,240 800,235 790,255 800,260",
  "g 675,40 690,45 700,38", "g 690,190 710,170 700,140 725,125 715,150 725,165", "g 705,120 715,130 690,135 700,150", "g 830,375 850,385 830,390 832,403 850,405 845,390", "g 862,455 885,460 880,475 900,490 890,515 910,520 895,535 915,540 900,555 935,550", "g 865,520 880,510 875,530", "g 905,565 925,562",
  "g 935,560 950,600 955,640 970,670", "g 432,285 440,278 460,300 475,318", "g 520,285 540,280 550,300 560,285", "g 590,325 590,312", "g 622,632 565,688", "g 300,705 315,700 330,720 335,705 350,715 360,705", "g 290,455 310,470 308,455",
];

const WATER = [
  "c 800,24 835,30 850,70 868,90 872,135 900,150 925,160 935,120 950,110 945,60 960,24 1544,24 1544,1440 f 1568,1133 1544,1133 e 1150,1133 1190,1050 1250,975 1320,910 1395,878 f 0,865 120,830 220,850 f 250,700 330,590 h 0,590 80,560 310,530 400,480 440,400 385,355 360,310 340,240 418,150 422,100 500,20 g 700,680 720,560 720,430 640,400 440,420 400,440 285,445 320,395 400,380 480,330 640,315 665,285 705,295 755,310 g 720,260 700,200 690,120 670,100 668,34 750,34 740,0 c 1115,230 1095,150 1080,110 1020,115 960,85 968,24",
  "e 540,1065 560,1080 590,1110 640,1080 680,1100 685,1133 580,1133",
  "e 35,680 70,700 100,695 150,720 200,700 230,750 150,750 130,725 80,730",
  "e 180,550 195,525 202,580 185,585", "e 375,500 400,498 405,518", "e 688,470 694,515 690,500",
  "c 875,320 890,322 888,342",
];
const LAKES = [
  "a 797,645 830,580 870,545 890,548 850,580", "a 790,770 850,735 900,700 920,680 910,735 860,750 800,795",
  "a 520,550 560,525 600,480 610,500 580,550 545,575",
  "b 1500,350 1530,325 1568,335 1568,350 1540,345", "c 0,335 30,315 70,352 20,355 0,350",
];

const LAND_GAPS = [
  "g 672,435 720,430 782,460 740,490 692,480 690,560 670,645 655,600 650,500 655,465",
  "g 285,225 312,215 293,260 293,320 315,385 307,410 297,402 298,378 270,320 270,255",
  "g 575,205 610,200 640,240 672,288 650,308 640,275",
  "h 90,5 150,40 240,60 350,95 340,40 375,0 425,5 380,60 422,105 418,150 330,140 280,105 180,70",
  "g 390,690 430,705 400,720 370,715",
  "h 110,280 140,320 170,320 215,370 245,382 345,330 360,310 385,355 315,378 315,400 265,410 215,397 175,382 150,350",
  "g 705,220 735,245 760,310 750,320 720,265",
];

const ROADS = [
  "a 0,550 60,680 130,740 200,800 330,800 480,790 570,740 640,720 760,740 900,560 1030,560 1180,500 1250,420 1360,300 1440,280 1568,230",
  "a 280,90 170,440 140,620 110,720 130,760", "a 330,60 370,170 390,340 380,450 310,520 290,620 350,680 420,640",
  "a 545,24 500,170 520,250 510,340 460,440 490,560 560,690 600,760", "a 540,90 640,120 720,240 720,320 780,390 820,520 870,560",
  "a 390,325 500,330 640,270 700,250", "a 850,24 850,100 880,160 960,200 1040,210 1200,100 1400,120 1568,250",
  "a 1100,210 1130,300 1240,310 1350,270 1470,180 1568,60", "a 720,330 850,320 960,260 1100,260",
  "a 500,540 620,440 760,430 900,370 980,360", "a 900,540 970,620 1100,600 1240,560 1310,420 1290,330",
  "a 1240,760 1230,680 1350,560 1450,560 1500,450", "a 1060,760 1100,650 1220,600 1340,620",
  "a 640,740 720,900 730,980 900,960", "a 0,780 130,770 200,860 320,910 560,870 640,720", "a 0,620 60,640 110,720",
  "a 780,440 860,330 1030,200 1090,80 1200,24", "a 1200,370 1240,470 1320,520 1300,640 1230,760",
  "a 130,80 200,200 300,240 390,325", "a 1190,24 1200,100", "a 860,840 980,740 1030,640 1060,520 1000,430",
  "b 0,260 80,200 190,180 340,110 400,90 500,60 600,24", "b 390,90 490,190 550,240 560,330", "b 0,100 80,24",
  "b 300,24 400,95 460,100 540,220 620,250 700,240", "b 680,80 730,130 720,200 760,240 740,300 860,320",
  "b 920,24 920,150 890,260 930,300", "b 1150,24 1140,120 1130,200 1145,340", "b 740,320 900,330 940,310",
  "b 910,270 1060,270 1240,290 1350,280", "b 900,200 1020,180 1130,180 1200,180", "b 1330,24 1300,120 1340,230 1350,310",
  "b 1350,280 1420,200 1520,130 1568,24", "b 1145,345 1240,345 1350,300", "b 350,110 340,200 360,300 260,340", "b 480,260 430,310 280,330",
  "c 0,180 130,200 210,120 340,30", "c 480,24 485,120 420,260 415,365", "c 100,80 170,90 190,150 170,250 300,210 400,240 480,270 620,260 800,290",
  "c 370,24 450,80 580,90 640,140 700,160 780,190", "c 580,90 640,24", "c 610,120 590,200 640,280 750,300 880,220", "c 120,320 170,250 280,200",
  "c 0,60 100,90 150,60", "c 940,190 930,280 1000,360", "c 870,170 800,240 690,330", "c 960,100 1000,150 1090,160 1070,200 980,190 900,170", "c 1000,150 960,220 1030,240",
  "d 0,480 30,560 0,650", "d 10,980 150,940 300,1000 500,1080 750,1060 900,1090 1200,1060 1400,1080 1500,1000",
  "d 1500,60 1430,120 1300,180 1200,90 1110,60", "d 1430,120 1568,200", "d 1060,180 980,100 1000,20",
  "d 1200,1133 1300,900 1130,740 1050,560", "d 800,600 880,500 980,450", "d 150,1133 300,900 260,640 400,560 600,540", "d 400,900 560,640 640,560",
  "e 0,60 60,160 70,300 80,420 0,450", "e 0,340 70,310 220,320 300,290 330,200 300,120", "e 220,170 220,300 250,350 260,500 310,600 330,720",
  "e 310,190 320,350 330,560 340,780", "e 590,260 600,400 650,470 800,580 820,600 890,600", "e 0,500 100,620 250,730 330,780",
  "e 330,780 500,640 650,640 860,650 1000,640 1080,620", "e 0,1000 180,860 300,820 340,960 400,1100", "e 300,820 460,820 610,840 800,860 960,850",
  "e 720,370 830,430 920,330 1040,300", "e 810,260 800,400 810,580", "e 810,600 700,650 600,830", "e 860,650 780,750 700,880 650,1000",
  "e 860,650 860,800 840,1000 760,1060", "e 890,380 960,470 1120,530 1130,640 1240,720 1300,760", "e 1050,460 920,580 820,600", "e 430,240 500,280 590,270 780,300",
  "e 440,330 500,410 490,600", "e 490,600 460,680 460,820", "e 960,640 1080,740 1160,880 1230,960", "e 1300,880 1230,950 1180,1050 1160,1133", "e 1130,850 1200,820 1290,900",
  "e 100,720 0,800", "e 100,720 200,700", "e 330,760 430,680 560,630", "e 0,960 50,880 110,780", "e 30,1133 60,1000 150,900 260,800",
];
const RIVERS = [
  "a 130,70 180,90 260,70 320,60 420,90 450,120 430,190 500,230 580,240 630,150 700,190 740,250 800,190 870,160",
  "a 0,160 50,170 40,220", "a 0,310 60,330", "a 470,100 500,60 490,110 470,80", "a 1270,440 1310,420 1290,480 1310,460",
  "a 1420,400 1450,350 1490,300", "a 1400,530 1450,500 1490,490 1480,540", "a 280,890 330,840 390,880",
  "a 580,570 640,530 720,490 780,480", "a 870,545 920,520 960,490 1020,490", "a 510,545 545,580", "a 600,470 650,470 700,420",
  "a 510,850 560,820 600,850", "b 620,30 650,60 690,50", "b 985,40 1040,30 1070,50", "b 820,160 850,210 840,190", "b 1420,270 1470,290 1520,340 1568,340",
  "e 330,60 350,150 380,180 375,400 370,470", "e 790,260 820,310 850,360 830,430 870,470 890,540 940,610 960,700 970,800 1050,890 1070,970",
  "e 1120,1000 1130,1060 1115,1133", "d 980,20 1010,40 1000,140", "e 30,680 90,730 120,740",
  "d 1040,480 1060,560 1120,720 1200,850 1300,940", "d 520,660 600,560", "d 1330,560 1440,660", "h 150,340 250,390 370,325",
];
const BORDERS = [
  "a 205,328 480,338 715,343", "a 730,333 960,335 1205,337", "a 1390,337 1485,337 1495,322 1568,322 b 0,335 20,322 135,325 b 150,338",
  "a 725,328 790,288 830,288 960,235 975,160 1045,155 1080,120 1085,70 1135,28", "d 0,130 420,128", "d 930,130 920,170 870,190 830,290 850,340 940,420", "d 0,1040 15,1133",
];

const LABELS = [
  ["Bristol", 1491, 249, 63, 20, 1561], ["KNOXVILLE", 1113, 394, 126, 22, 1245], ["Danville", 1984, 250, 79, 20, 2070],
  ["NORFOLK", 2520, 194, 108, 22, 2635], ["Virginia Beach", 2698, 191, 145, 20, 2691], ["Rock Hill", 1678, 623, 88, 20, 1772],
  ["COLUMBIA", 1644, 828, 121, 22, 1770], ["Sumter", 1816, 846, 75, 20, 1897], ["Florence", 1910, 784, 85, 20, 2001],
  ["SOUTH", 1834, 883, 91, 25, 0], ["CAROLINA", 1811, 915, 138, 25, 0], ["Myrtle Beach", 2024, 895, 131, 20, 2161],
  ["Aiken", 1653, 924, 56, 20, 1646], ["Augusta", 1512, 943, 80, 20, 1600], ["Greenville", 1417, 641, 92, 20, 1520],
  ["Anderson", 1374, 716, 96, 20, 1477], ["Athens", 1268, 837, 70, 20, 1344], ["ATLANTA", 1044, 882, 108, 22, 1160],
  ["", 0, 596, 0, 20, 993],
];
const FAINT_LABELS = [
  ["Greensboro", 1876, 367, 115, 20, 1997], ["Hickory", 1633, 443, 75, 20, 1715], ["Charlotte", 1706, 557, 93, 20, 1805],
  ["NORTH", 2087, 443, 93, 25, 0], ["CAROLINA", 2065, 474, 137, 25, 0], ["Asheville", 1400, 474, 92, 20, 1498],
  ["Greenville", 2332, 469, 98, 20, 2437], ["Goldsboro", 2218, 521, 100, 20, 2325], ["Fayetteville", 2044, 595, 112, 20, 2163],
  ["Jacksonville", 2302, 662, 114, 20, 2430], ["WILMINGTON", 2179, 779, 145, 24, 2335],
];
const SCHOOLS = [
  ["#a04fd0", 265, 92], ["#e0403a", 283, 115], ["#8fe04a", 298, 103], ["#a04fd0", 272, 130], ["#a04fd0", 350, 124],
];

function PlaceNames({ items }) {
  return items.map(([name, x, y, w, size, dot]) => (
    <g key={name + x}>
      {name && <text x={x} y={y} fontSize={size} textLength={w} lengthAdjust="spacingAndGlyphs">{name}</text>}
      {dot > 0 && <rect x={dot - 3} y={y - 11} width="6" height="6" stroke="none" />}
    </g>
  ));
}

function DistrictMap() {
  return (
    <MapCanvas viewBox="990 138 1890 800" strokeLinejoin="round" strokeLinecap="round">
      {WATER.map((d, i) => <path key={i} d={outline(d)} fill="#d5dadd" />)}
      {LAKES.map((d, i) => <path key={i} d={outline(d)} fill="#e2e6e9" />)}
      {LAND_GAPS.map((d, i) => <path key={i} d={outline(d)} fill="#fafaf8" />)}
      <g fill="none" stroke="#e8e9e9" strokeWidth="1.6">
        {ROADS.map((d, i) => <path key={i} d={curve(d)} />)}
      </g>
      <g fill="none" stroke="#dce2e6" strokeWidth="2">
        {RIVERS.map((d, i) => <path key={i} d={curve(d)} />)}
      </g>
      <g fill="none" stroke="#e3c8cd" strokeWidth="2" strokeDasharray="4 4" strokeLinecap="butt">
        {BORDERS.map((d, i) => <path key={i} d={line(d)} />)}
      </g>
      <g fill="#94a0af" fontFamily="'Open Sans', sans-serif" fontWeight="600" stroke="#fafaf8" strokeWidth="3" paintOrder="stroke">
        <PlaceNames items={LABELS} />
      </g>
      <g stroke="#4f4a40" strokeWidth="1.9">
        {DISTRICTS.map(([fill, d], i) => <path key={i} d={outline(d)} fill={fill} />)}
      </g>
      <g fill="none" stroke="#4f4a40" strokeWidth="1.9">
        <path d={line("a 1285,680 1300,692 1305,682 1312,705 1318,715 1330,712 1350,745 1352,735 1375,735 1378,782 1395,784 1400,858")} />
        <path d={line("b 595,365 597,410 610,430 625,410 622,400 610,398 612,365")} />
        <path d={line("a 1218,1115 1225,1130")} />
      </g>
      <g fill="none" stroke="#77766f" strokeWidth="1.7">
        {COAST.map((d, i) => <path key={i} d={line(d)} />)}
      </g>
      <g fill={GRAY} stroke="#444" strokeWidth="2">
        <path d={outline("a 885,1035 908,1015 925,1030 935,1062 952,1075 925,1112 905,1112 880,1098 862,1110 850,1090 868,1072 890,1065")} />
        <path d={outline("a 828,1145 845,1135 856,1115 855,1140 840,1158")} />
        <path d={line("a 890,1065 940,1062 952,1078")} />
        <path d={outline("f 450,292 480,290 495,290 530,315 552,308 557,345 567,372 515,428 495,400 505,365 490,330 475,322 480,340 495,355 485,375 465,380 460,408 445,385 450,350 443,320")} />
        <path d={line("f 550,388 575,372 565,390")} strokeWidth="4" />
      </g>
      <g fill="#5b5340" opacity="0.17" fontFamily="'Open Sans', sans-serif" fontWeight="600">
        <PlaceNames items={FAINT_LABELS} />
      </g>
      <path
        d={outline("g 178,35 392,35 420,70 430,150 375,172 370,185 335,192 310,212 295,180 262,160 220,153 167,128 170,90 190,58")}
        fill={L}
        stroke="#f4553c"
        strokeOpacity="0.7"
        strokeWidth="6.5"
      />
      {SCHOOLS.map(([fill, x, y], i) => {
        const [[cx, cy]] = project(`g ${x},${y}`);
        return (
          <g key={i} fill={fill}>
            <circle cx={cx} cy={cy} r="10.5" opacity="0.62" />
            <circle cx={cx} cy={cy} r="4" opacity="0.5" />
          </g>
        );
      })}
    </MapCanvas>
  );
}

const COLUMNS = [
  ["Gates County Schools", 418], ["Total", 112], ["POC", 119], ["White", 120], ["Black", 119],
  ["Hispanic", 154], ["Asian", 111], ["Pacific Islander", 249], ["American Indian", 260], ["Multiracial", 180],
];
const ROWS = [
  ["# of Students", "1475", "568", "907", "421", "44", "0", "1", "1", "101"],
  ["% of Student", "100%", "38.5%", "61.5%", "28.5%", "3.0%", "0.0%", "0.1%", "0.1%", "6.8%"],
  ["# of School Board Members", "5", "1", "4", "1", "0", "0", "0", "0", "0"],
  ["% of School Board Members", "100%", "20.0%", "80.0%", "20.0%", "0.0%", "0.0%", "0.0%", "0.0%", "0.0%"],
  ["# of Teachers", "119", "26", "93", "26", "NA", "NA", "NA", "NA", "NA"],
  ["% of Teachers", "100%", "21.9%", "78.2%", "21.9%", "NA", "NA", "NA", "NA", "NA"],
];

export default function App() {
  return (
    <>
      <GlobalStyle />
      <Navbar>
        <Brand>E(Race)ing Inequities Dashboard</Brand>
        <NavItem>Welcome</NavItem>
        <NavItem>Case Study Exploration</NavItem>
        <NavItem>Data Exploration <Caret /></NavItem>
        <NavItem>About</NavItem>
      </Navbar>
      <Page>
        <Sidebar>
          <SidebarBody>
            <Title $track={0.45}>Public School Representation</Title>
            <Pair $top={19}>
              <div>
                <Label $track={0.1}>Compare Student % To:</Label>
                <Control>School Boards <Caret $size={10} /></Control>
              </div>
              <div>
                <Label>Demographic</Label>
                <Control>People of Color <Caret $size={10} /></Control>
              </div>
            </Pair>
            <Pair $top={60}>
              <Check><Box /><span>Show All White School Boards</span></Check>
              <Check><Box /><span>Show All Black School Boards</span></Check>
            </Pair>
            <Rule $top={70} $bottom={41} />
            <Title $track={0.4}>Gates County Schools</Title>
            <Rule $top={39} $bottom={40} />
            <Note $track={0.04}>Below are links to the <b>Gates County Schools</b> websites:</Note>
            <Links>
              <a>School Board Website</a>
              <a>District Website</a>
            </Links>
            <Rule $top={40} $bottom={40} />
            <Pair>
              <div>
                <Label $track={-0.25}>Find your school</Label>
                <Control $placeholder>Find your School</Control>
              </div>
              <div>
                <Label $track={-0.05}>Show or Hide Schools</Label>
                <Radios>
                  <Radio $on /><RadioLabel>Show</RadioLabel>
                  <Radio /><RadioLabel>Hide</RadioLabel>
                </Radios>
              </div>
            </Pair>
            <Note $top={40} $track={0.2}>Click on a school for more information</Note>
          </SidebarBody>
          <SidebarFooter>
            <Button>Close Out of District</Button>
            <Button>Help</Button>
          </SidebarFooter>
        </Sidebar>
        <div>
          <MapFrame>
            <DistrictMap />
            <ZoomBar>
              <ZoomButton>
                <svg width="24" height="24"><path d="M12 0V24M0 12H24" stroke="currentColor" strokeWidth="4.4" /></svg>
              </ZoomButton>
              <ZoomButton $off>
                <svg width="24" height="24"><path d="M0 12H24" stroke="currentColor" strokeWidth="4.4" /></svg>
              </ZoomButton>
            </ZoomBar>
            <Legend $top={281} $width={205} $height={174}>
              <LegendTitle $gap={6}>School Level</LegendTitle>
              <LegendRow $gap={16}><Swatch $color="#b9ff9f" />High</LegendRow>
              <LegendRow $gap={16}><Swatch $color="#f5988f" />Middle</LegendRow>
              <LegendRow $gap={16}><Swatch $color="#c595f2" />Primary</LegendRow>
            </Legend>
            <Legend $top={475} $width={626} $height={305}>
              <LegendTitle $gap={22}>Over/Under Representation of POC Students</LegendTitle>
              <Scale>
                <ScaleBar />
                <Ticks><i /><i /><i /><i /><i /></Ticks>
                <ScaleLabels>
                  <span>-100%</span><span>-50%</span><span>0%</span><span>50%</span><span>100%</span>
                </ScaleLabels>
              </Scale>
              <LegendRow $gap={12}><Swatch $color={GRAY} />No Demographic Data for District</LegendRow>
            </Legend>
            <Attribution>
              <a>Leaflet</a> | © <a>OpenStreetMap</a> contributors © <a>CARTO</a>
            </Attribution>
          </MapFrame>
          <Table>
            <colgroup>{COLUMNS.map(([name, w]) => <Col key={name} $w={w} />)}</colgroup>
            <thead>
              <tr>{COLUMNS.map(([name], i) => <Th key={name} $first={i === 0}>{name}</Th>)}</tr>
            </thead>
            <tbody>
              {ROWS.map((row, r) => (
                <Row key={row[0]} $striped={r % 2 === 0}>
                  {row.map((cell, i) => (
                    <Td key={i} $first={i === 0} $shade={i === 2} $last={r === ROWS.length - 1}>{cell}</Td>
                  ))}
                </Row>
              ))}
            </tbody>
          </Table>
        </div>
      </Page>
    </>
  );
}
